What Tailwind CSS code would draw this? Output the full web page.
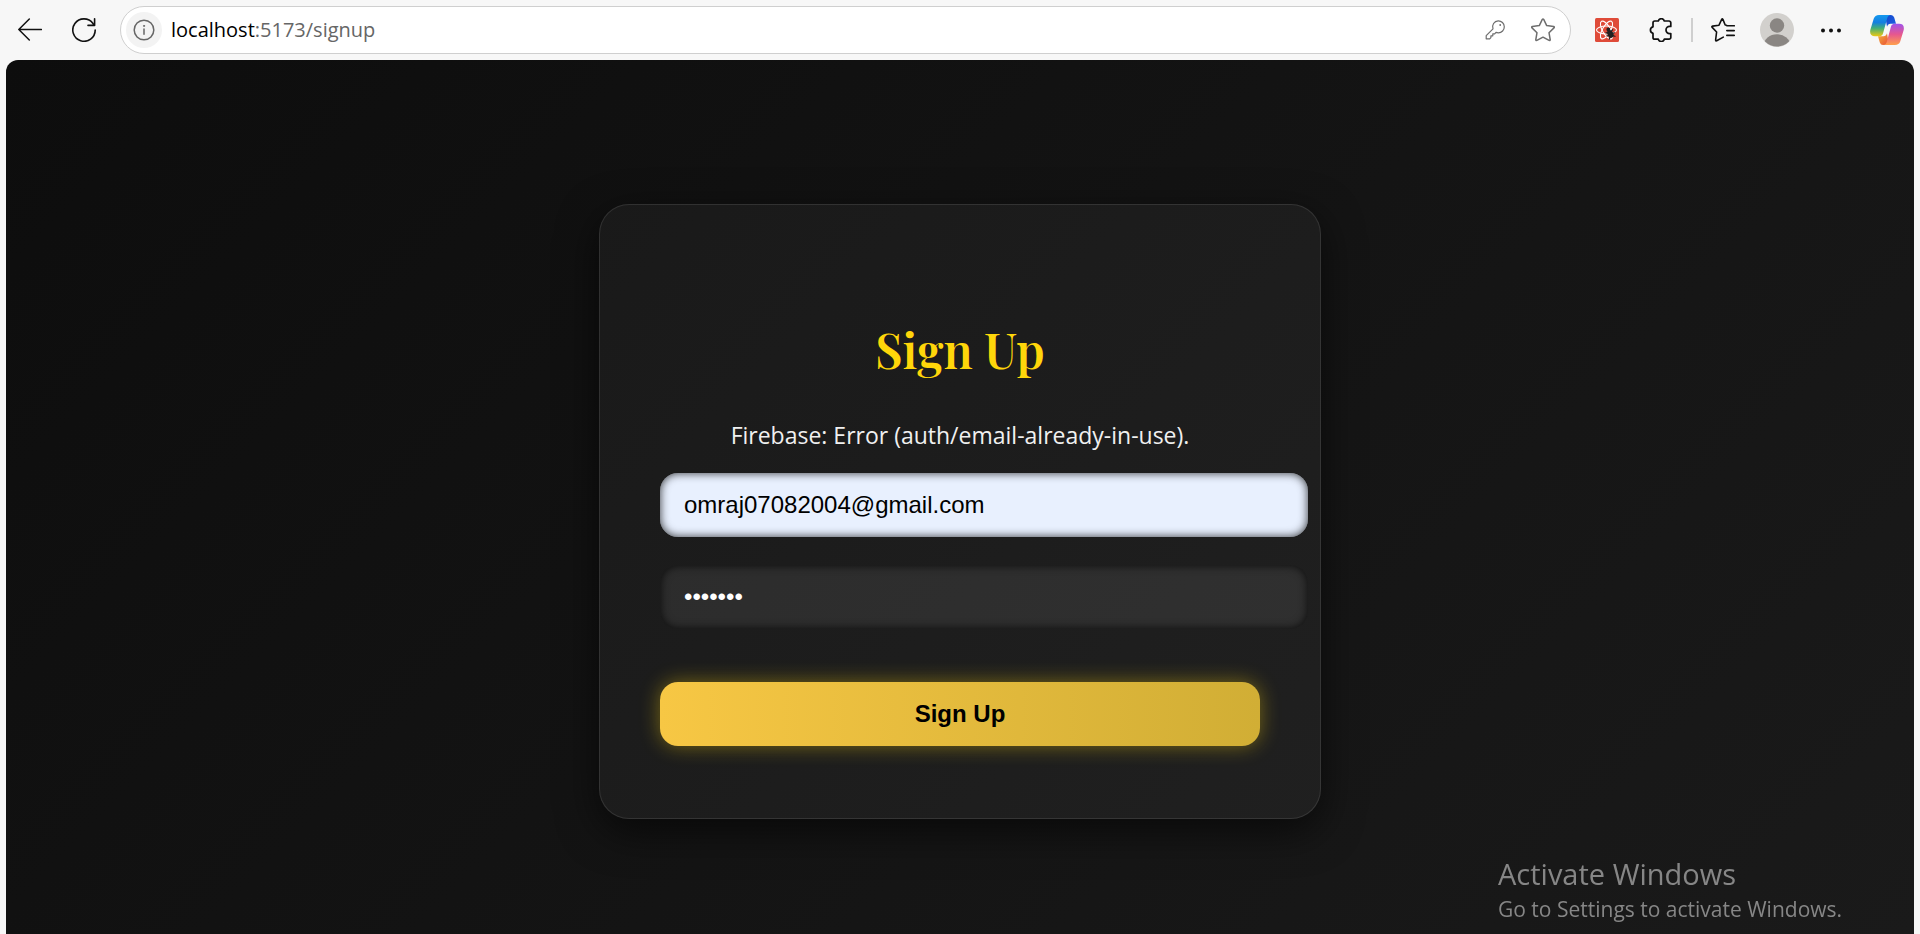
<!DOCTYPE html>
<html lang="en">
<head>
<meta charset="utf-8">
<meta name="viewport" content="width=device-width, initial-scale=1">
<title>Sign Up</title>
<script src="https://cdn.jsdelivr.net/npm/@tailwindcss/browser@4"></script>
</head>
<body class="flex h-screen flex-col overflow-hidden bg-[#f7f7f7] font-['Segoe_UI','Open_Sans',sans-serif] text-black">
  <header class="flex h-[60px] shrink-0 items-center gap-[18px] pr-[15px] pl-3">
    <button type="button" aria-label="Back" class="grid size-9 place-items-center">
      <svg class="size-6" viewBox="0 0 24 24" fill="none" stroke="#111" stroke-width="1.5" stroke-linecap="round" stroke-linejoin="round"><path d="M23.4 11.5H.8M11.3 1 .8 11.5 11.3 22"/></svg>
    </button>
    <button type="button" aria-label="Refresh" class="grid size-9 place-items-center">
      <svg class="size-6" viewBox="0 0 24 24" fill="none" stroke="#111" stroke-width="1.6" stroke-linecap="round" stroke-linejoin="round"><path d="M23.2 12A11.2 11.2 0 1 1 21 5.4l1.4 1.8M22.6.8v6.6H16"/></svg>
    </button>
    <div class="flex h-12 min-w-0 flex-1 items-center rounded-full border border-[#cfcfcf] bg-white pr-[9px] pl-[5px]">
      <button type="button" aria-label="View site information" class="grid size-9 shrink-0 place-items-center rounded-full bg-[#f3f3f3]">
        <svg class="size-[22px]" viewBox="0 0 22 22" fill="none" stroke="#666" stroke-width="1.5" stroke-linecap="round"><circle cx="11" cy="11" r="9.8"/><path d="M11 10v5.2"/><circle cx="11" cy="6.9" r=".6" fill="#666" stroke-width=".8"/></svg>
      </button>
      <p class="min-w-0 flex-1 truncate pl-[9px] text-[20px] leading-7">localhost<span class="text-[#666]">:5173/signup</span></p>
      <button type="button" aria-label="Saved passwords" class="grid size-9 shrink-0 place-items-center">
        <svg class="size-5" viewBox="0 0 20 20" fill="none" stroke="#6e6e6e" stroke-width="1.2" stroke-linejoin="round"><path d="M13.2.8a6 6 0 0 1 .2 12 6.500 6.500 0 0 1-2.400-.4l-1.300 1.400H7.800v2H5.900v1.800l-1.200 1.200H1.200v-3.200L8 8.900A6 6 0 0 1 13.200.8Z"/><circle cx="15.200" cy="5" r=".9" fill="#6e6e6e" stroke="none"/></svg>
      </button>
      <button type="button" aria-label="Add to favorites" class="ml-3 grid size-9 shrink-0 place-items-center">
        <svg class="size-6" viewBox="0 0 24 24" fill="none" stroke="#6e6e6e" stroke-width="1.5" stroke-linejoin="round"><path d="M11.3 1.400q.7-1 1.400 0l3 6.200 6.900 1q1.200.3.400 1.300l-5 4.800 1.200 6.900q.1 1.200-1.100.8L12 19.200l-6.100 3.200q-1.200.4-1.100-.8L6 14.700 1 9.900q-.8-1 .4-1.300l6.900-1Z"/></svg>
      </button>
    </div>
    <button type="button" aria-label="React Developer Tools" class="grid size-9 place-items-center">
      <svg class="size-6" viewBox="0 0 24 24" fill="none">
        <rect width="24" height="24" rx="1.500" fill="#df4b39"/>
        <g stroke="#fff" stroke-width="1.100"><ellipse cx="11.500" cy="12" rx="10" ry="4"/><ellipse cx="11.500" cy="12" rx="10" ry="4" transform="rotate(60 11.500 12)"/><ellipse cx="11.500" cy="12" rx="10" ry="4" transform="rotate(120 11.500 12)"/></g>
        <g transform="rotate(-25 15 15)" stroke="#222" stroke-width="1.200"><ellipse cx="15" cy="16" rx="2.300" ry="3.500" fill="#222"/><circle cx="15" cy="11" r="1.300" fill="#222"/><path d="M11 13l3 1.500M10.500 16.500h3M11.500 20.500l2-2M19 13 16 14.500M19.500 16.500h-3M18.500 20.500l-2-2"/></g>
      </svg>
    </button>
    <button type="button" aria-label="Extensions" class="grid size-9 place-items-center">
      <svg class="size-6" viewBox="0 0 24 24" fill="none" stroke="#111" stroke-width="1.700" stroke-linejoin="round"><path d="M5.500 3H9.300a3.100 3.100 0 0 1 6 0h4.700a1.800 1.800 0 0 1 1.800 1.800V8.400h-1.200a3.600 3.600 0 0 0 0 7.200h1.200v3.800a1.800 1.800 0 0 1-1.800 1.800h-4.700a3.100 3.100 0 0 1-6 0H5.800a1.800 1.800 0 0 1-1.800-1.800v-4a3.400 3.400 0 0 1 0-6.600V4.800A1.800 1.800 0 0 1 5.800 3Z"/></svg>
    </button>
    <span class="-mx-1.5 h-6 w-0.5 bg-[#cfcfcf]"></span>
    <button type="button" aria-label="Favorites" class="grid size-9 place-items-center">
      <svg class="size-6" viewBox="0 0 24 24" fill="none" stroke="#111" stroke-width="1.600" stroke-linecap="round" stroke-linejoin="round"><path d="M15.500 7.200 14.200 7 11.900 1.400q-.6-1-1.200 0L8 7.200l-6.400.9q-1.200.3-.4 1.300L5.600 14l-1 8q0 1.200 1.100.8l6.600-3.700M15.800 7.800h7.500M15.800 12.600h7.500M15.800 17.400h7.500"/></svg>
    </button>
    <button type="button" aria-label="Profile" class="grid size-9 place-items-center">
      <svg class="size-[34px]" viewBox="0 0 34 34"><defs><clipPath id="face"><circle cx="17" cy="17" r="16.500"/></clipPath></defs><circle cx="17" cy="17" r="17" fill="#d2d0cd"/><g fill="#8a8683" clip-path="url(#face)"><circle cx="17" cy="12.500" r="7.200"/><ellipse cx="17" cy="32.500" rx="13.200" ry="11.200"/></g></svg>
    </button>
    <button type="button" aria-label="Settings and more" class="grid size-9 place-items-center">
      <svg class="h-6 w-6" viewBox="0 0 24 24" fill="#111"><circle cx="4" cy="12.500" r="2"/><circle cx="12" cy="12.500" r="2"/><circle cx="20" cy="12.500" r="2"/></svg>
    </button>
    <button type="button" aria-label="Copilot" class="ml-0.5 grid size-9 place-items-center">
      <svg class="h-[30px] w-[34px]" viewBox="0 0 34 30">
        <defs>
          <linearGradient id="cpA" x1="0" y1="0" x2="0" y2="1"><stop offset="0" stop-color="#1499ee"/><stop offset=".35" stop-color="#147fe0"/><stop offset=".62" stop-color="#42ae78"/><stop offset="1" stop-color="#edc911"/></linearGradient>
          <linearGradient id="cpB" x1="0" y1="0" x2="0" y2="1"><stop offset="0" stop-color="#a053eb"/><stop offset=".5" stop-color="#e6578f"/><stop offset="1" stop-color="#ffa04b"/></linearGradient>
          <linearGradient id="cpC" x1="0" y1="0" x2="1" y2="1"><stop offset="0" stop-color="#1746c9"/><stop offset="1" stop-color="#1b62e5"/></linearGradient>
          <linearGradient id="cpD" x1="0" y1="0" x2="1" y2="1"><stop offset="0" stop-color="#f4b63a"/><stop offset="1" stop-color="#e94b38"/></linearGradient>
        </defs>
        <path d="M15 0h6q2.400 0 3.200 2.600L26 8.800h-5.500q-2.600 0-3.500 3Z" fill="url(#cpC)"/>
        <path d="M19 30h-6q-2.400 0-3.200-2.600L8 21.200h5.500q2.600 0 3.500-3Z" fill="url(#cpD)"/>
        <path d="M9 0h12q-2.800 0-3.800 3.200L13 18.500q-.8 2.800-3.600 2.800H5Q-.8 21.300.3 15L3.700 3.800Q4.900 0 9 0Z" fill="url(#cpA)"/>
        <path d="M25 30H13q2.800 0 3.800-3.200L21 11.500q.8-2.800 3.600-2.800H29q5.800 0 4.700 6.300l-3.400 11.200Q29.100 30 25 30Z" fill="url(#cpB)"/>
      </svg>
    </button>
  </header>

  <main class="mx-1.5 flex flex-1 items-start justify-center overflow-hidden rounded-t-xl bg-linear-[135deg,#0d0d0d,#1a1a1a] pt-36">
    <form class="flex w-full max-w-[722px] shrink-0 flex-col rounded-[30px] border border-white/10 bg-white/4 px-[60px] pt-28 pb-[72px] shadow-[0_12px_40px_rgba(0,0,0,0.6)]">
      <h1 class="text-center font-['Playfair_Display','Liberation_Serif',serif] text-5xl leading-16 font-semibold text-[#ffd60a]">Sign Up</h1>
      <p role="alert" class="mt-9 text-center text-[23px] leading-9 text-[#f0f0f0]">Firebase: Error (auth/email-already-in-use).</p>
      <input type="email" aria-label="Email" value="omraj07082004@gmail.com" class="mt-5 h-16 w-[calc(100%+48px)] rounded-[18px] bg-[#e8f0fe] px-6 font-['Liberation_Sans',sans-serif] text-2xl text-black shadow-[inset_0_0_10px_rgba(0,0,0,0.8)] outline-none">
      <input type="password" aria-label="Password" value="omraj07" class="mt-7 h-16 w-[calc(100%+48px)] rounded-[18px] bg-white/8 px-6 font-['Liberation_Sans',sans-serif] text-2xl text-white shadow-[inset_0_0_10px_rgba(0,0,0,0.8)] outline-none">
      <button type="submit" class="mt-[53px] h-16 rounded-[18px] bg-linear-to-r from-[#f7c744] to-[#d1ae35] font-['Liberation_Sans',sans-serif] text-2xl font-bold text-black shadow-[0_0_20px_rgba(255,214,10,0.4)]">Sign Up</button>
    </form>
  </main>

  <aside class="pointer-events-none fixed right-20 bottom-2.5 w-[342px] whitespace-nowrap text-[#868686]">
    <p class="text-[29px] leading-10">Activate Windows</p>
    <p class="text-[21px] leading-[30px]">Go to Settings to activate Windows.</p>
  </aside>
</body>
</html>
